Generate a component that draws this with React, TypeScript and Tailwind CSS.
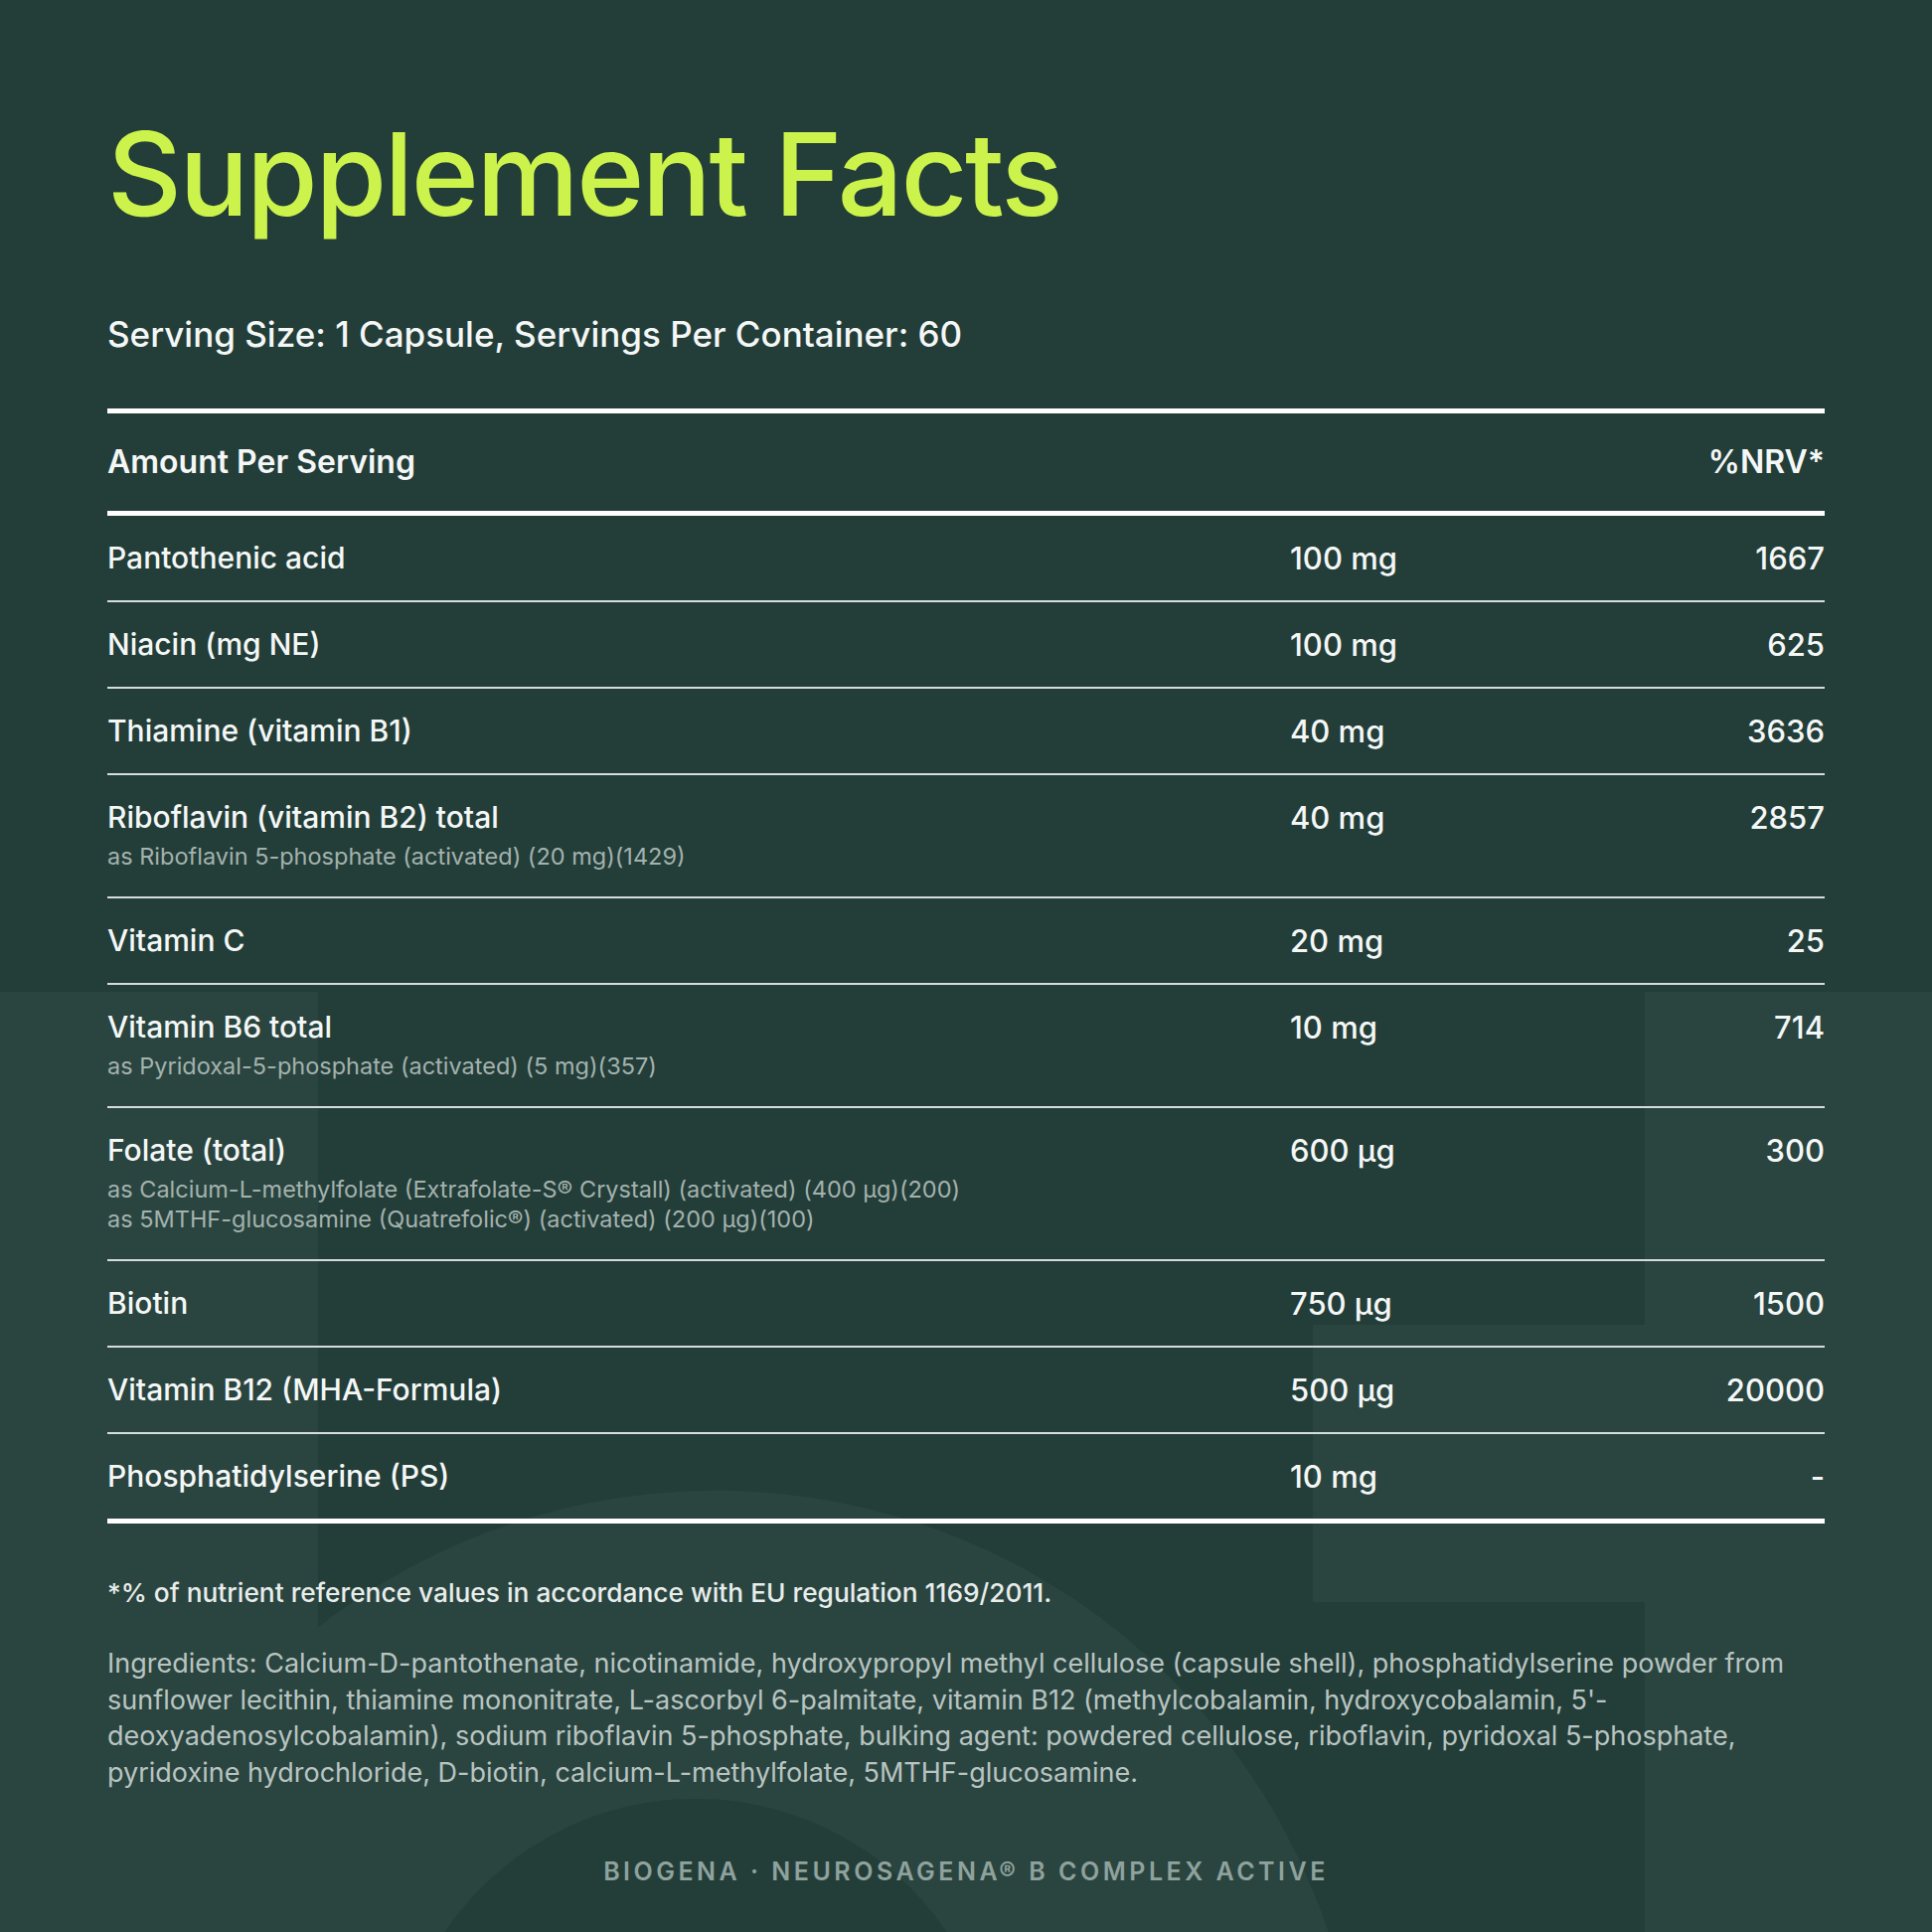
const rows: { name: string; sub?: string[]; amount: string; nrv: string }[] = [
  { name: "Pantothenic acid", amount: "100 mg", nrv: "1667" },
  { name: "Niacin (mg NE)", amount: "100 mg", nrv: "625" },
  { name: "Thiamine (vitamin B1)", amount: "40 mg", nrv: "3636" },
  {
    name: "Riboflavin (vitamin B2) total",
    sub: ["as Riboflavin 5-phosphate (activated) (20 mg)(1429)"],
    amount: "40 mg",
    nrv: "2857",
  },
  { name: "Vitamin C", amount: "20 mg", nrv: "25" },
  {
    name: "Vitamin B6 total",
    sub: ["as Pyridoxal-5-phosphate (activated) (5 mg)(357)"],
    amount: "10 mg",
    nrv: "714",
  },
  {
    name: "Folate (total)",
    sub: [
      "as Calcium-L-methylfolate (Extrafolate-S® Crystall) (activated) (400 µg)(200)",
      "as 5MTHF-glucosamine (Quatrefolic®) (activated) (200 µg)(100)",
    ],
    amount: "600 µg",
    nrv: "300",
  },
  { name: "Biotin", amount: "750 µg", nrv: "1500" },
  { name: "Vitamin B12 (MHA-Formula)", amount: "500 µg", nrv: "20000" },
  { name: "Phosphatidylserine (PS)", amount: "10 mg", nrv: "-" },
];

const ingredients = [
  "Ingredients: Calcium-D-pantothenate, nicotinamide, hydroxypropyl methyl cellulose (capsule shell), phosphatidylserine powder from",
  "sunflower lecithin, thiamine mononitrate, L-ascorbyl 6-palmitate, vitamin B12 (methylcobalamin, hydroxycobalamin, 5'-",
  "deoxyadenosylcobalamin), sodium riboflavin 5-phosphate, bulking agent: powdered cellulose, riboflavin, pyridoxal 5-phosphate,",
  "pyridoxine hydrochloride, D-biotin, calcium-L-methylfolate, 5MTHF-glucosamine.",
];

// faint brand letters behind the table
function Watermark() {
  return (
    <svg
      className="absolute inset-0 pointer-events-none"
      width="1944"
      height="1944"
      viewBox="0 0 1944 1944"
    >
      <g fill="#2a4540">
        <rect x="0" y="998" width="320" height="946" />
        <rect x="1655" y="998" width="289" height="335" />
        <rect x="1321" y="1333" width="623" height="279" />
        <rect x="1655" y="1612" width="289" height="332" />
        <path
          fillRule="evenodd"
          d="M70 2150a650 650 0 1 0 1300 0a650 650 0 1 0 -1300 0Z M395 2115a305 305 0 1 0 610 0a305 305 0 1 0 -610 0Z"
        />
      </g>
    </svg>
  );
}

export default function App() {
  return (
    <main
      className="relative w-[1944px] h-[1944px] overflow-hidden bg-[#233e39] text-[#f4f7f6]"
      style={{ fontFamily: "Inter, 'Noto Sans', sans-serif" }}
    >
      <Watermark />
      <div className="relative px-[108px] pt-[117px]">
        <h1 className="text-[116px] leading-none font-medium tracking-[-0.02em] text-[#ccf34c]">
          Supplement Facts
        </h1>
        <p className="mt-[83px] text-[35px] leading-[40px] font-medium">
          Serving Size: 1 Capsule, Servings Per Container: 60
        </p>

        <div className="mt-[55px] border-t-[5px] border-b-[5px] border-white">
          <div className="flex justify-between py-[30px] text-[32px] leading-[38px] font-semibold">
            <span>Amount Per Serving</span>
            <span>%NRV*</span>
          </div>
        </div>

        <div className="border-b-[5px] border-white">
          {rows.map((r, i) => (
            <div
              key={r.name}
              className={`grid grid-cols-[1190px_1fr_auto] pt-[24px] pb-[24px] ${
                i < rows.length - 1 ? "border-b-2 border-[#d5dcda]" : ""
              } ${r.sub ? "pb-[25px]" : ""}`}
            >
              <div>
                <div className="text-[30px] leading-[37px] font-medium">{r.name}</div>
                {r.sub && (
                  <div className="mt-[6px] text-[23.5px] leading-[30px] text-[#a3b2ae]">
                    {r.sub.map((s) => (
                      <div key={s}>{s}</div>
                    ))}
                  </div>
                )}
              </div>
              <div className="text-[31px] leading-[37px] font-medium">{r.amount}</div>
              <div className="text-[31px] leading-[37px] font-medium text-right">{r.nrv}</div>
            </div>
          ))}
        </div>

        <p className="mt-[54px] text-[26.3px] leading-[32px] font-medium text-[#e8edeb]">
          *% of nutrient reference values in accordance with EU regulation 1169/2011.
        </p>

        <div className="mt-[37px] text-[27px] leading-[36.5px] text-[#b9c4c1]">
          {ingredients.map((l) => (
            <div key={l}>{l}</div>
          ))}
        </div>

        <div className="mt-[67px] text-center text-[25px] leading-[28px] font-semibold tracking-[0.14em] text-[#8fa29d]">
          BIOGENA · NEUROSAGENA® B COMPLEX ACTIVE
        </div>
      </div>
    </main>
  );
}
